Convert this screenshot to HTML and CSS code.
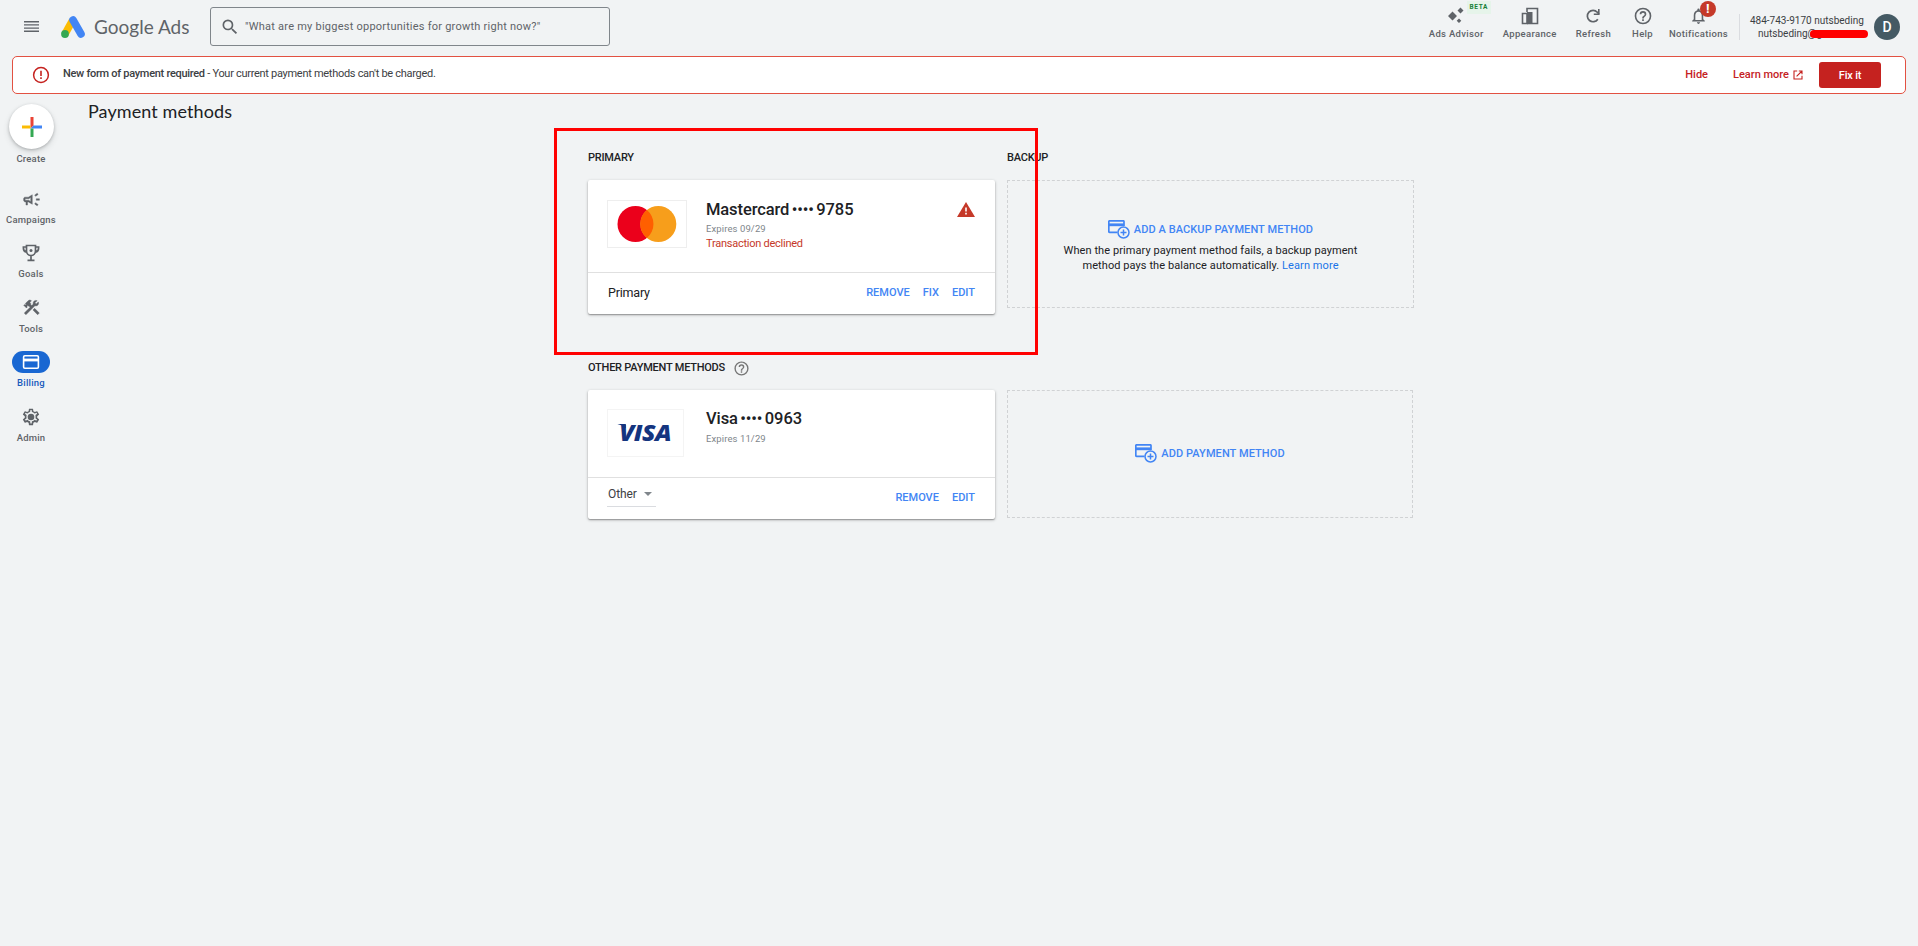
FILE: index.html
```html
<!DOCTYPE html>
<html lang="en">
<head>
  <meta charset="UTF-8">
  <meta name="viewport" content="width=device-width, initial-scale=1.0">
  <title>Payment methods - Google Ads</title>
  <link rel="stylesheet" href="styles.css">
</head>
<body>
  <header class="topbar">
    <svg class="menu" width="16" height="12" viewBox="0 0 16 12" fill="#5f6368"><path d="M0 0h15v1.400H0zM0 3.200h15v1.400H0zM0 6.400h15v1.400H0zM0 9.600h15V11H0z"/></svg>
    <svg class="logo" width="24" height="22" viewBox="0 0 24 22">
      <path d="M4 18 11.500 4.500" stroke="#fbbc04" stroke-width="7.600" stroke-linecap="butt"/>
      <path d="M12 4 20 18" stroke="#4285f4" stroke-width="7.600" stroke-linecap="round"/>
      <circle cx="4" cy="18" r="3.900" fill="#34a853"/>
    </svg>
    <span class="brand">Google Ads</span>
    <div class="search">
      <svg width="20" height="20" viewBox="0 0 24 24" fill="#5f6368"><path d="M15.500 14h-.79l-.28-.27A6.470 6.470 0 0 0 16 9.500 6.500 6.500 0 1 0 9.500 16c1.610 0 3.090-.59 4.230-1.570l.27.28v.79l5 4.990L20.490 19zm-6 0C7.010 14 5 11.990 5 9.500S7.010 5 9.500 5 14 7.010 14 9.500 11.990 14 9.500 14"/></svg>
      <span>"What are my biggest opportunities for growth right now?"</span>
    </div>
    <nav class="tools">
      <div class="tool advisor">
        <svg width="18" height="18" viewBox="0 0 18 18" fill="#5f6368"><path d="M5.500 4.500 10 9l-4.500 4.500L1 9zM13.500.5l3 3-3 3-3-3zM12 11.500l2.300 2.300-2.300 2.300-2.300-2.300z"/></svg>
        <span>Ads Advisor</span>
        <b class="beta">BETA</b>
      </div>
      <div class="tool appearance">
        <svg width="18" height="18" viewBox="0 0 18 18"><path d="M6 5V1.500h10.500v15H6" fill="none" stroke="#5f6368" stroke-width="1.600"/><path d="M1.500 6.500H6v10H1.500z" fill="none" stroke="#5f6368" stroke-width="1.600"/><path d="M6 5h5.500v11.500H6z" fill="#5f6368"/></svg>
        <span>Appearance</span>
      </div>
      <div class="tool refresh">
        <svg width="18" height="18" viewBox="0 0 18 18"><path d="M13.800 12.200A5.700 5.700 0 1 1 13.300 5.200L15 7" fill="none" stroke="#5f6368" stroke-width="1.700"/><path d="M15.600 2v6H9.800V6.400H14V2z" fill="#5f6368"/></svg>
        <span>Refresh</span>
      </div>
      <div class="tool help">
        <svg width="20" height="20" viewBox="0 0 24 24" fill="#5f6368"><path d="M11 18h2v-2h-2zm1-16a10 10 0 1 0 0 20 10 10 0 0 0 0-20m0 18c-4.410 0-8-3.590-8-8s3.590-8 8-8 8 3.590 8 8-3.590 8-8 8m0-14a4 4 0 0 0-4 4h2c0-1.100.9-2 2-2s2 .9 2 2c0 2-3 1.750-3 5h2c0-2.250 3-2.500 3-5a4 4 0 0 0-4-4"/></svg>
        <span>Help</span>
      </div>
      <div class="tool notifications">
        <svg width="19" height="19" viewBox="0 0 24 24" fill="#5f6368"><path d="M12 22c1.100 0 2-.9 2-2h-4c0 1.100.9 2 2 2m6-6v-5c0-3.070-1.630-5.640-4.500-6.320V4a1.500 1.500 0 0 0-3 0v.68C7.640 5.360 6 7.920 6 11v5l-2 2v1h16v-1zm-2 1H8v-6c0-2.480 1.510-4.500 4-4.500s4 2.020 4 4.500z"/></svg>
        <span>Notifications</span>
        <b class="alert">!</b>
      </div>
    </nav>
    <div class="account">
      <div>484-743-9170 nutsbeding</div>
      <div class="email">nutsbeding@g<span class="redacted"></span></div>
    </div>
    <div class="avatar">D</div>
  </header>

  <section class="banner">
    <svg width="18" height="18" viewBox="0 0 18 18"><circle cx="9" cy="9" r="7.400" fill="none" stroke="#c5221f" stroke-width="1.500"/><path d="M8.200 4.700h1.600v5.200H8.200zM8.200 11.300h1.600v1.700H8.200z" fill="#c5221f"/></svg>
    <p><b>New form of payment required</b> - Your current payment methods can't be charged.</p>
    <a class="hide">Hide</a>
    <a class="learn">Learn more
      <svg width="10" height="10" viewBox="0 0 10 10" fill="none" stroke="#c5221f" stroke-width="1.100"><path d="M4.200 1H1v8h8V5.800M5.800 1H9v3.200M9 1 3.600 6.400"/></svg>
    </a>
    <button class="fix">Fix it</button>
  </section>

  <div class="page">
    <aside class="sidebar">
      <div class="create">
        <svg width="20" height="20" viewBox="0 0 20 20"><path d="M8.500 0h3v8.500l-3 3z" fill="#ea4335"/><path d="M0 8.500h8.500v3H0z" fill="#fbbc04"/><path d="M11.500 8.500H20v3h-8.500l-3 0z" fill="#4285f4"/><path d="M8.500 11.500h3V20h-3z" fill="#34a853"/></svg>
      </div>
      <span class="create-label">Create</span>
      <div class="item">
        <i><svg width="19" height="19" viewBox="0 0 24 24" fill="#5f6368" stroke="#5f6368" stroke-width=".5"><path d="M18 11v2h4v-2zM16 17.610c.96.71 2.210 1.650 3.200 2.390l1.200-1.600c-.99-.74-2.240-1.680-3.200-2.400zM20.400 5.600 19.200 4c-.99.740-2.240 1.680-3.200 2.400l1.200 1.600c.96-.72 2.210-1.650 3.200-2.400M4 9c-1.100 0-2 .9-2 2v2c0 1.100.9 2 2 2h1v4h2v-4h1l5 3V6L8 9zm5.030 1.710L11 9.530v4.940l-1.970-1.180-.48-.29H4v-2h4.550z"/></svg></i>
        <span>Campaigns</span>
      </div>
      <div class="item">
        <i><svg width="18" height="18" viewBox="0 0 18 18" fill="none" stroke="#5f6368" stroke-width="1.700"><path d="M4.500 1.500h9V7a4.500 4.500 0 0 1-9 0zM4.500 3H1.400v1c0 2.500 1.200 3.800 3.200 4.200M13.500 3h3.100v1c0 2.500-1.200 3.800-3.200 4.200M9 11.500V16M5.500 16.300h7"/><circle cx="9" cy="6.500" r="1.500" fill="#5f6368" stroke="none"/></svg></i>
        <span>Goals</span>
      </div>
      <div class="item">
        <i><svg width="19" height="19" viewBox="0 0 24 24" fill="#5f6368" stroke="#5f6368" stroke-width=".5"><path d="m13.783 15.172 2.121-2.121 5.996 5.996-2.121 2.121zM17.500 10c1.930 0 3.500-1.570 3.500-3.500 0-.58-.16-1.120-.41-1.600l-2.700 2.700-1.490-1.490 2.700-2.700c-.48-.25-1.020-.41-1.600-.41C15.570 3 14 4.570 14 6.500c0 .41.08.8.210 1.160l-1.850 1.850-1.780-1.780.71-.71-1.410-1.410L12 3.490a3 3 0 0 0-4.240 0L4.220 7.030l1.410 1.410H2.810l-.71.71 3.540 3.540.71-.71V9.150l1.410 1.410.71-.71 1.780 1.780-7.410 7.410 2.120 2.120L16.340 9.790c.36.130.75.210 1.160.21"/></svg></i>
        <span>Tools</span>
      </div>
      <div class="item active">
        <i><svg width="18" height="14" viewBox="0 0 18 14"><rect x="1.600" y=".8" width="14.800" height="12.400" rx="1.200" fill="none" stroke="#fff" stroke-width="1.600"/><path d="M1.600 3.600h14.800v2.800H1.600z" fill="#fff"/></svg></i>
        <span>Billing</span>
      </div>
      <div class="item">
        <i><svg width="20" height="20" viewBox="0 0 24 24" fill="#5f6368"><path d="M19.430 12.980c.04-.32.07-.64.07-.98s-.03-.66-.07-.98l2.110-1.650c.19-.15.240-.42.120-.64l-2-3.460a.5.5 0 0 0-.61-.22l-2.490 1a7.300 7.300 0 0 0-1.690-.98l-.38-2.650A.49.49 0 0 0 14 2h-4c-.25 0-.46.180-.49.420l-.38 2.650c-.61.250-1.170.59-1.690.98l-2.490-1a.5.5 0 0 0-.61.220l-2 3.460c-.13.220-.07.490.12.640l2.110 1.650c-.04.320-.07.650-.07.980s.03.660.07.980l-2.110 1.650c-.19.150-.24.420-.12.640l2 3.460c.12.220.39.300.61.220l2.490-1c.52.400 1.080.730 1.690.980l.38 2.650c.03.240.24.420.49.420h4c.25 0 .46-.18.49-.42l.38-2.650c.61-.25 1.170-.59 1.690-.98l2.490 1c.23.090.49 0 .61-.22l2-3.460c.12-.22.07-.49-.12-.64zm-1.980-1.710q.075.465.05 1.150l-.14 1.130.89.700 1.080.84-.7 1.210-1.270-.51-1.040-.42-.9.680q-.645.480-1.250.73l-1.060.43-.16 1.130-.2 1.350h-1.400l-.35-2.480-1.060-.43q-.645-.27-1.230-.71l-.91-.7-1.060.43-1.270.51-.7-1.210 1.080-.84.89-.7-.14-1.130a6.300 6.300 0 0 1 0-1.700l.14-1.130-.89-.7-1.080-.84.7-1.210 1.270.51 1.040.42.900-.68q.645-.48 1.250-.73l1.060-.43.350-2.480h1.390l.35 2.480 1.060.43q.645.270 1.230.71l.91.700 1.060-.43 1.270-.51.7 1.210-1.070.85-.89.700z"/><circle cx="12" cy="12" r="4"/></svg></i>
        <span>Admin</span>
      </div>
    </aside>

    <main class="content">
      <h1>Payment methods</h1>
      <div class="methods">
        <h2>Primary</h2>
        <h2>Backup</h2>

        <article class="card">
          <div class="card-body">
            <div class="network mc">
              <svg width="60" height="36" viewBox="0 0 60 36"><circle cx="18.500" cy="18" r="18" fill="#eb001b"/><circle cx="41.300" cy="18" r="18" fill="#f79e1b"/><path d="M29.900 4.100a18 18 0 0 1 0 27.800 18 18 0 0 1 0-27.800" fill="#ff5f00"/></svg>
            </div>
            <div class="details">
              <h3>Mastercard <span class="dots">••••</span> 9785</h3>
              <p class="expires">Expires 09/29</p>
              <p class="declined">Transaction declined</p>
            </div>
            <svg class="warning" width="18" height="15" viewBox="0 0 18 15"><path d="M9 0 18 15H0z" fill="#c53929"/><path d="M8.200 5.500h1.600v4H8.200zM8.200 10.800h1.600v1.600H8.200z" fill="#fff"/></svg>
          </div>
          <div class="card-foot">
            <span class="role">Primary</span>
            <a>Remove</a>
            <a>Fix</a>
            <a>Edit</a>
          </div>
        </article>

        <div class="slot">
          <a class="add">
            <svg width="22" height="19" viewBox="0 0 22 19" fill="none" stroke="#4285f4"><path d="M9.500 12.300H1.600a.8.800 0 0 1-.8-.8V1.600a.8.800 0 0 1 .8-.8h13.600a.8.800 0 0 1 .8.800V6" stroke-width="1.700"/><path d="M1 4.800h15" stroke-width="2.800"/><circle cx="15.500" cy="12.500" r="5.500" stroke-width="1.500"/><path d="M15.500 9.500v6M12.500 12.500h6" stroke-width="1.500"/></svg>
            Add a backup payment method
          </a>
          <p>When the primary payment method fails, a backup payment<br>method pays the balance automatically. <a>Learn more</a></p>
        </div>

        <h2 class="other-title">Other payment methods
          <svg width="17" height="17" viewBox="0 0 24 24" fill="#757575"><path d="M11 18h2v-2h-2zm1-16a10 10 0 1 0 0 20 10 10 0 0 0 0-20m0 18c-4.410 0-8-3.590-8-8s3.590-8 8-8 8 3.590 8 8-3.590 8-8 8m0-14a4 4 0 0 0-4 4h2c0-1.100.9-2 2-2s2 .9 2 2c0 2-3 1.750-3 5h2c0-2.250 3-2.500 3-5a4 4 0 0 0-4-4"/></svg>
        </h2>

        <article class="card card-other">
          <div class="card-body">
            <div class="network visa"><span>VISA</span></div>
            <div class="details">
              <h3>Visa <span class="dots">••••</span> 0963</h3>
              <p class="expires">Expires 11/29</p>
            </div>
          </div>
          <div class="card-foot">
            <div class="select">Other</div>
            <a>Remove</a>
            <a>Edit</a>
          </div>
        </article>

        <div class="slot slot-other">
          <a class="add">
            <svg width="22" height="19" viewBox="0 0 22 19" fill="none" stroke="#4285f4"><path d="M9.500 12.300H1.600a.8.800 0 0 1-.8-.8V1.600a.8.800 0 0 1 .8-.8h13.600a.8.800 0 0 1 .8.800V6" stroke-width="1.700"/><path d="M1 4.800h15" stroke-width="2.800"/><circle cx="15.500" cy="12.500" r="5.500" stroke-width="1.500"/><path d="M15.500 9.500v6M12.500 12.500h6" stroke-width="1.500"/></svg>
            Add payment method
          </a>
        </div>

        <div class="highlight"></div>
      </div>
    </main>
  </div>
</body>
</html>
```
FILE: styles.css
```css
* {
  box-sizing: border-box;
}
body {
  margin: 0;
  min-height: 946px;
  background: #f1f3f4;
  font-family: Roboto, "Liberation Sans", sans-serif;
  font-size: 11px;
  color: #202124;
}
h1, h2, h3, p {
  margin: 0;
}
svg {
  display: block;
  flex: none;
}

/* Top bar */
.topbar {
  display: flex;
  align-items: center;
  height: 56px;
  padding: 0 18px 3px 24px;
}
.logo {
  margin-left: 21px;
}
.brand {
  width: 115px;
  margin-left: 9px;
  font-family: Lato, sans-serif;
  font-size: 19px;
  color: #5f6368;
  white-space: nowrap;
}
.search {
  display: flex;
  align-items: center;
  gap: 5px;
  width: 400px;
  height: 39px;
  margin-left: 1px;
  padding-left: 9px;
  border: 1px solid #80868b;
  border-radius: 3px;
  color: #5f6368;
  font-size: 11px;
  letter-spacing: 0.24px;
}
.tools {
  display: flex;
  align-self: flex-start;
  gap: 19px;
  margin-left: auto;
  margin-right: 11px;
}
.tool {
  position: relative;
  display: flex;
  flex-direction: column;
  align-items: center;
  padding-top: 6px;
  color: #5f6368;
  font-size: 9.500px;
  font-weight: 500;
  letter-spacing: 0.33px;
}
.tool svg {
  height: 20px;
}
.tool span {
  margin-top: 2px;
  line-height: 12px;
}
.help {
  margin: 0 -3px 0 2px;
}
.beta {
  position: absolute;
  top: 1px;
  right: -7px;
  width: 24px;
  height: 13px;
  background: #e6f4ea;
  color: #188038;
  font-size: 6.500px;
  line-height: 13px;
  text-align: center;
  letter-spacing: 0.6px;
}
.alert {
  position: absolute;
  top: 1px;
  left: 31px;
  width: 16px;
  height: 16px;
  border-radius: 50%;
  background: #c53929;
  color: #fff;
  font-size: 13px;
  line-height: 16px;
  text-align: center;
}
.account {
  height: 26px;
  width: 126px;
  border-left: 1px solid #dadce0;
  padding-left: 10px;
  color: #3c4043;
  font-size: 10px;
  line-height: 13px;
  white-space: nowrap;
}
.email {
  position: relative;
  padding-left: 8px;
}
.redacted {
  position: absolute;
  left: 60px;
  top: 3px;
  width: 58px;
  height: 8px;
  border-radius: 4px;
  background: #f00;
}
.avatar {
  width: 26px;
  height: 26px;
  margin-left: 9px;
  border-radius: 50%;
  background: #455a64;
  color: #fff;
  font-size: 14px;
  font-weight: 500;
  line-height: 26px;
  text-align: center;
}

/* Payment alert */
.banner {
  display: flex;
  align-items: center;
  height: 38px;
  margin: 0 12px;
  padding: 0 24px 0 19px;
  border: 1px solid #e25142;
  border-radius: 5px;
  background: #fff;
}
.banner p {
  margin: 0 auto 3px 13px;
  color: #3c4043;
  letter-spacing: -0.29px;
}
.banner b {
  font-weight: 500;
}
.banner a {
  margin-bottom: 1px;
  color: #c5221f;
  font-weight: 500;
}
.banner .learn {
  display: flex;
  align-items: center;
  gap: 4px;
  margin: 0 16px 1px 25px;
}
.fix {
  width: 62px;
  height: 26px;
  padding: 0;
  border: 0;
  border-radius: 3px;
  background: #c5221f;
  color: #fff;
  font: 500 11px Roboto, sans-serif;
  letter-spacing: -0.2px;
}

.page {
  display: flex;
}

/* Left rail */
.sidebar {
  display: flex;
  flex-direction: column;
  align-items: center;
  width: 62px;
  padding-top: 10px;
  color: #5f6368;
  font-size: 9.500px;
  font-weight: 500;
  letter-spacing: 0.2px;
  line-height: 12px;
}
.create {
  display: flex;
  align-items: center;
  justify-content: center;
  width: 45px;
  height: 45px;
  margin-left: 1px;
  border-radius: 50%;
  background: #fff;
  box-shadow: 0 1px 3px rgba(60, 64, 67, 0.3), 0 3px 6px rgba(60, 64, 67, 0.15);
}
.create-label {
  margin: 4px 0 23px;
}
.item {
  display: flex;
  flex-direction: column;
  align-items: center;
  height: 54.400px;
}
.item i {
  display: flex;
  align-items: center;
  justify-content: center;
  width: 38px;
  height: 22px;
  margin-bottom: 4px;
  border-radius: 11px;
}
.active {
  color: #185abc;
}
.active i {
  background: #1967d2;
}

/* Payment methods */
h1 {
  padding: 7px 0 0 26px;
  font-family: Lato, sans-serif;
  font-size: 18px;
  font-weight: 400;
  letter-spacing: 0.1px;
  line-height: 20px;
}
.methods {
  position: relative;
  display: grid;
  grid-template-columns: 407px 407px;
  column-gap: 12px;
  margin: 30px 0 0 526px;
}
h2 {
  height: 29px;
  font-size: 11px;
  font-weight: 500;
  letter-spacing: -0.23px;
  line-height: 14px;
  text-transform: uppercase;
}
.card {
  height: 134px;
  border-radius: 2px;
  background: #fff;
  box-shadow: 0 1px 3px rgba(0, 0, 0, 0.3), 0 1px 1px rgba(0, 0, 0, 0.2);
}
.card-body {
  display: flex;
  height: 93px;
  padding: 20px 20px 0 19px;
  border-bottom: 1px solid #e0e0e0;
}
.network {
  display: flex;
  align-items: center;
  justify-content: center;
  width: 80px;
  height: 48px;
  border: 1px solid #eee;
}
.details {
  margin-left: 19px;
}
h3 {
  margin-top: 1px;
  font-size: 16.500px;
  font-weight: 500;
  letter-spacing: -0.1px;
  line-height: 18px;
  word-spacing: -1.500px;
}
.dots {
  font-size: 16px;
}
.expires {
  margin-top: 3px;
  color: #80868b;
  font-size: 9.500px;
  letter-spacing: 0.1px;
  line-height: 13px;
}
.declined {
  margin-top: 2px;
  color: #c53929;
  letter-spacing: -0.25px;
  line-height: 13px;
}
.warning {
  margin: 2px 0 0 auto;
}
.card-foot {
  display: flex;
  align-items: center;
  gap: 13px;
  height: 41px;
  padding: 0 20px 3px;
}
.card-foot a {
  color: #4285f4;
  font-weight: 500;
  text-transform: uppercase;
}
.role {
  margin-right: auto;
  font-size: 12.500px;
  letter-spacing: -0.2px;
}
.slot {
  display: flex;
  flex-direction: column;
  align-items: center;
  height: 128px;
  padding-top: 39px;
  border: 1px dashed #d0d2d4;
  letter-spacing: 0.08px;
  line-height: 15px;
  text-align: center;
}
.slot a {
  color: #1a73e8;
}
.slot .add {
  display: flex;
  align-items: center;
  gap: 4px;
  color: #4285f4;
  font-weight: 500;
  text-transform: uppercase;
}
.slot p {
  margin-top: 4px;
}
.other-title {
  display: flex;
  gap: 8px;
  grid-column: span 2;
  margin-top: 47px;
}
.other-title svg {
  margin-top: -1px;
}
.card-other {
  height: 129px;
}
.card-other .card-body {
  height: 88px;
  padding-top: 19px;
}
.card-other .details {
  margin-left: 22px;
}
.card-other .expires {
  margin-top: 4px;
}
.visa {
  width: 77px;
  border-color: #f4f4f4;
}
.visa span {
  position: relative;
  margin-bottom: 3px;
  color: #14357f;
  font: italic 900 22px "Open Sans", sans-serif;
  letter-spacing: -0.5px;
  transform: scaleX(1.12);
}
/* flag at the left end of the V */
.visa span::before {
  content: "";
  position: absolute;
  top: 7px;
  left: -3px;
  width: 9px;
  height: 5px;
  background: #14357f;
  clip-path: polygon(0 0, 100% 0, 100% 100%, 60% 40%);
}
.select {
  display: flex;
  align-items: center;
  justify-content: space-between;
  width: 49px;
  height: 25px;
  margin: 0 auto 5px -1px;
  padding: 0 4px 0 1px;
  border-bottom: 1px solid #dadce0;
  color: #3c4043;
  font-size: 12px;
  letter-spacing: -0.1px;
}
.select::after {
  content: "";
  border: 4px solid transparent;
  border-top-color: #80868b;
  border-bottom: 0;
}
.slot-other {
  width: 406px;
  padding-top: 53px;
}

/* Frame drawn over the primary method */
.highlight {
  position: absolute;
  top: -23px;
  left: -34px;
  width: 484px;
  height: 227px;
  border: 3px solid #f00;
}
```
